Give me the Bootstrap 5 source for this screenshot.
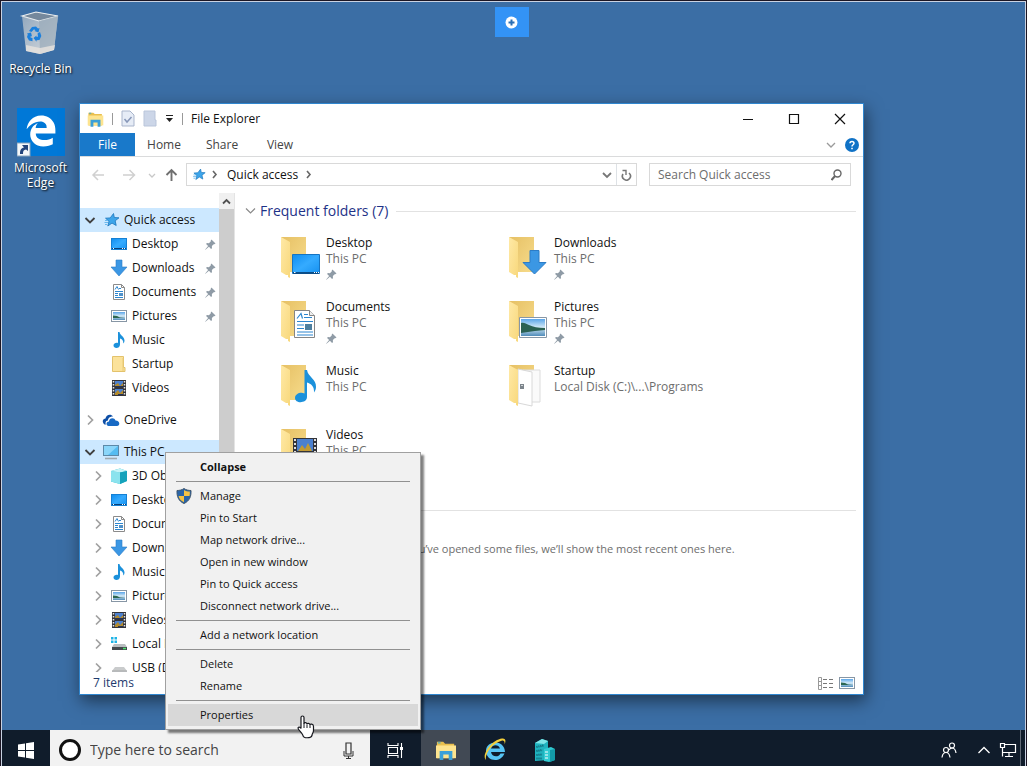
<!DOCTYPE html>
<html lang="en">
<head>
<meta charset="utf-8">
<meta name="viewport" content="width=device-width, initial-scale=1">
<title>File Explorer</title>
<link href="https://cdn.jsdelivr.net/npm/bootstrap@5.3.0/dist/css/bootstrap.min.css" rel="stylesheet">
<style>
  :root { --ui: "Open Sans", "Noto Sans", sans-serif; }
  body { font: 12px/16px var(--ui); color: #111; background: #1c1624; padding: 1px 1px 0 1px; }
  a { color: inherit; text-decoration: none; }
  button { font: inherit; color: inherit; background: none; border: 0; padding: 0; }
  svg { display: block; flex: none; }
  .screen { border: 1px solid #c9d2e2; border-bottom: 0; background: #3b6ea5; }

  .shortcuts { padding: 9px 0 0 5px; width: 72px; color: #fff; text-shadow: 1px 1px 2px #000; line-height: 15px; }
  .shortcuts a { margin-bottom: 32px; }
  .plus-tab { top: 5px; left: 50%; margin-left: -19px; width: 34px; height: 30px; background: #3393f6; }

  .win { left: 77px; right: 161px; top: 101px; bottom: 35px; background: #fff; border: 1px solid #2f86cf; box-shadow: 2px 6px 16px rgba(0,0,0,.5); }
  .titlebar { height: 29px; padding-left: 7px; }
  .titlebar .tick { width: 1px; height: 12px; background: #999; }
  .caption-btn { width: 46px; height: 28px; }
  .ribbon { height: 24px; border-bottom: 1px solid #dadbdc; color: #444; }
  .ribbon .file-tab { width: 55px; background: #1979ca; color: #fff; }
  .ribbon .ribbon-tab { width: 58px; }
  .address { height: 36px; padding: 6px 12px 7px 10px; }
  .field { border: 1px solid #d9d9d9; height: 23px; background: #fff; }
  .field input { border: 0; outline: 0; font: inherit; color: #6d6d6d; min-width: 0; background: none; }
  .find-field { width: 202px; margin-left: 12px; }
  input::placeholder { color: #6d6d6d; opacity: 1; }

  .navpane { width: 139px; padding-top: 15px; }
  .navpane a { height: 24px; display: flex; align-items: center; white-space: nowrap; padding-left: 4px; }
  .navpane a.sub { padding-left: 12px; }
  .navpane a.on { background: #cce8ff; }
  .navpane .gap-top { margin-top: 8px; }
  .navpane .ar { width: 12px; height: 12px; }
  .navpane .ic { width: 18px; height: 18px; margin: 0 4px 0 6px; }
  .navpane .ic + span { flex: 1; }
  .pin { width: 11px; height: 11px; }
  .navpane .pin { margin-right: 3px; }
  .scroller { width: 16px; background: #cdcdcd; border-right: 1px solid #e4e4e4; }
  .scroller button { height: 16px; background: #f0f0f0; }
  .listing { padding: 7px 7px 0 10px; }
  .group-head { font-size: 14px; line-height: 22px; color: #1e3287; white-space: nowrap; }
  .group-head .rule { height: 1px; background: #e2e2e2; }
  .folders { grid-template-columns: 228px 228px; grid-auto-rows: 64px; padding: 13px 0 0 35px; height: 277px; }
  .folders a { color: #6d6d6d; gap: 6px; }
  .folders strong { color: #111; font-weight: 400; display: block; }
  .folders .pin { margin-top: 2px; }
  .empty-note { font-size: 11px; color: #6d6d6d; padding: 20px 0 0 12px; }
  .statusbar { height: 22px; padding: 0 7px 0 13px; color: #1e3a6e; }

  .ctx { left: 163px; bottom: 0; width: 256px; font-size: 11px; background: #f1f1f1; border: 1px solid #a0a0a0; padding: 3px 2px; box-shadow: 3px 3px 2px rgba(0,0,0,.5); z-index: 3; }
  .ctx button { height: 22px; display: flex; align-items: center; width: 100%; padding-left: 32px; white-space: nowrap; }
  .ctx button.with-icon { padding-left: 8px; gap: 8px; }
  .ctx button.hover { background: #d8d8d8; }
  .ctx hr { margin: 3px 8px; border-top: 1px solid #919191; opacity: 1; }
  .pointer { left: 295px; bottom: -9px; z-index: 4; }

  .taskbar { height: 36px; background: #101c2b; color: #fff; }
  .taskbar button, .cortana { padding-top: 4px; }
  .taskbar .cortana button, .tray button { padding-top: 0; }
  .taskbar .start { width: 48px; }
  .cortana { width: 320px; background: #f2f2f2; padding: 4px 12px 0 8px; }
  .cortana input { font: 14px/20px var(--ui); border: 0; outline: 0; background: none; min-width: 0; }
  .cortana input::placeholder { color: #444; }
  .task { width: 49px; }
  .task.view { width: 51px; }
  .task.live { background: #414954; }
  .tray { padding: 4px 3px 0 0; }
  .peek { width: 5px; border-left: 1px solid #626b77 !important; }
</style>
<script src="https://cdn.jsdelivr.net/npm/bootstrap@5.3.0/dist/js/bootstrap.bundle.min.js"></script>
</head>
<body class="vh-100 d-flex flex-column overflow-hidden">

<!-- shared icon set -->
<svg width="0" height="0" class="position-absolute" aria-hidden="true">
  <defs>
    <linearGradient id="gBack" x1="0" y1="0" x2="1" y2="1"><stop offset="0" stop-color="#e6c064"/><stop offset="1" stop-color="#f7dc8c"/></linearGradient>
    <linearGradient id="gFlap" x1="0" y1="0" x2="1" y2="1"><stop offset="0" stop-color="#ffe9a6"/><stop offset="1" stop-color="#f8d87c"/></linearGradient>
    <linearGradient id="gBlue" x1="0" y1="0" x2="1" y2="1"><stop offset="0" stop-color="#0f8df0"/><stop offset=".5" stop-color="#35abff"/><stop offset="1" stop-color="#1691f0"/></linearGradient>
    <linearGradient id="gSky" x1="0" y1="0" x2="0" y2="1"><stop offset="0" stop-color="#5aa5e8"/><stop offset=".5" stop-color="#d5ebf8"/><stop offset="1" stop-color="#4f8bb8"/></linearGradient>
    <linearGradient id="gBin" x1="0" y1="0" x2="1" y2="1"><stop offset="0" stop-color="#8fa5bb"/><stop offset=".7" stop-color="#c3ccd5"/><stop offset="1" stop-color="#e8e8e6"/></linearGradient>
  </defs>
  <symbol id="right" viewBox="0 0 12 12"><path d="M4 1.500l4.500 4.500L4 10.500" fill="none" stroke="#a0a0a0" stroke-width="1.700"/></symbol>
  <symbol id="open" viewBox="0 0 12 12"><path d="M1.500 4L6 8.500 10.500 4" fill="none" stroke="#404040" stroke-width="1.800"/></symbol>
  <symbol id="pin" viewBox="0 0 12 12"><path d="M7 .5l4.500 4.500-1.500.8-.5-.2L7.500 7.700l.1 2.300-1 .8-2.300-2.300L.5 11.800l-.3-.3 3.200-3.900L1.200 5.400l.8-1 2.300.1L6.400 2.500l-.2-.6z" fill="#8f9ba6"/></symbol>
  <symbol id="star" viewBox="0 0 18 18"><path d="M11.500 2.500l.8 4 4.700.3-3.800 3 1 4.700-4.200-2.400L5.800 15l1.200-4.700L3.500 7.200l4.700-.3z" fill="#3da5ea" stroke="#1a76bd" stroke-width=".8"/><path d="M3 9.500h3M2.500 11.500h3.500M3 13.500h2" stroke="#68b7ed" stroke-width="1"/></symbol>
  <symbol id="desk" viewBox="0 0 18 18"><rect x="1.500" y="3.500" width="15" height="11" fill="url(#gBlue)" stroke="#1580d4"/><path d="M2 13.500h14" stroke="#073f78"/><path d="M3 13.500h1M12 13.500h1m1 0h1" stroke="#fff"/></symbol>
  <symbol id="down" viewBox="0 0 18 18"><path d="M6 1h6v7h5L9 17 1 8h5z" fill="#3b97e4" stroke="#2c7cc6" stroke-width=".6"/></symbol>
  <symbol id="doc" viewBox="0 0 18 18"><path d="M3.500 1.500h8l3 3v12h-11z" fill="#fff" stroke="#8b8b8b"/><path d="M11.500 1.500v3h3" fill="none" stroke="#8b8b8b"/><path d="M5 6.500l2-3 1.500 3M9 5.500h2M5 8.500h8M5 10.500h3M5 12.500h3M5 14.500h8" stroke="#2c86cf" fill="none"/><path d="M9 10h4v3H9z" fill="#4f91c9"/></symbol>
  <symbol id="pic" viewBox="0 0 18 18"><rect x="1.500" y="3.500" width="15" height="11" fill="#fff" stroke="#8796a5"/><rect x="3" y="5" width="12" height="8" fill="url(#gSky)"/><path d="M3 8.500l4 .5 3 1.500 5 .5H3z" fill="#2b6650"/></symbol>
  <symbol id="music" viewBox="0 0 18 18"><path d="M8 1h1.500c.5 3.500 5 4.500 5 8.500 0 1.500-.7 2.500-1.200 3 .3-3-1.500-4.500-3.300-5V13.500c0 4.500-6.500 4.500-6.500 1 0-2.300 2.800-3.300 4.500-2.500z" fill="#1c91db"/></symbol>
  <symbol id="fold" viewBox="0 0 18 18"><path d="M2.500 1.500h11v11h1.500v4H2.500z" fill="#fbe29a" stroke="#e3c26c"/><path d="M13 3v13" stroke="#e9ca76"/></symbol>
  <symbol id="video" viewBox="0 0 18 18"><path d="M2 1h14v16H2z" fill="#33343a"/><path d="M3.500 2v14M14.500 2v14" stroke="#e5e5e5" stroke-width="1.500" stroke-dasharray="1.500 1.500"/><path d="M5 2h8v6H5zM5 10h8v6H5z" fill="#4b80cf"/><path d="M5 6l3-2 2 3 3-3v4H5zM5 14l3-3 2 3 3-3v5H5z" fill="#b48a2a"/><path d="M5 7h8v1H5zM8 15h5v1H8z" fill="#25345a"/></symbol>
  <symbol id="cloud" viewBox="0 0 18 18"><path d="M1.500 12.500C-.5 9 2 7.500 3.500 7.500 4 3.500 9 2.500 11 5.500 7 5.500 6 8 6 9.500 3.500 9.500 3 12.500 4 13.500 3 13.500 2 13.500 1.500 12.500z" fill="#0d4ea6"/><path d="M6.500 15C3.500 14.500 4 10.500 7 10.500 7 6.500 12.500 6 13.500 9.500 18 9.500 18.500 15 15 15z" fill="#1769c4"/></symbol>
  <symbol id="pc" viewBox="0 0 18 18"><rect x="1.500" y="2.500" width="15" height="10" fill="#55bcf2" stroke="#5c89a8"/><path d="M2 3h14L6 12H2z" fill="#8ad6fa"/><path d="M3 15.500h12" stroke="#9fa8ae" stroke-width="1.600"/></symbol>
  <symbol id="cube" viewBox="0 0 18 18"><path d="M1 4l9-2.500L17 4v10l-7 3-9-2.500z" fill="#25b7cd"/><path d="M1 4l9 1.500V17l-9-2.500z" fill="#8be3ee"/><path d="M1 4l9-2.500L17 4l-7 1.500z" fill="#c6f4f8"/><path d="M10 5.500L17 4v10l-7 3z" fill="#15a2bb"/></symbol>
  <symbol id="disk" viewBox="0 0 18 18"><path d="M1 2h2.500v2.500H1zM4.500 2H7v2.500H4.500zM1 5.500h2.500V8H1zM4.500 5.500H7V8H4.500z" fill="#1fb4e6"/><path d="M4 9h11l2 3H2z" fill="#b9bdc0"/><path d="M2 12h15v3H2z" fill="#43484c"/><path d="M13 13.500h3" stroke="#4be36c" stroke-width="1.500"/></symbol>
  <symbol id="usb" viewBox="0 0 18 18"><path d="M5 8h9l3 4v4H2v-4z" fill="#c9cbcc"/><path d="M2 12h15" stroke="#a6a8a9"/></symbol>
  <symbol id="explorer" viewBox="0 0 24 22"><path d="M2 2h7l2 2h10v16H2z" fill="#e9bf4d"/><path d="M1 6h22v14H1z" fill="#fde48f"/><path d="M3 2h3v2H3z" fill="#6fb0a8"/><path d="M5 12h14v10h-4v-6H9v6H5z" fill="#3aa0d8"/></symbol>
  <symbol id="bigfold" viewBox="0 0 40 44"><path d="M1 2h25v35H9z" fill="url(#gBack)"/><path d="M1 2l9 5v36l-2-1v-2l-2 0-5-3z" fill="url(#gFlap)"/></symbol>
  <symbol id="edge" viewBox="0 0 512 512"><path d="M25.714 228.163c.111-.162.23-.323.342-.485-.021.162-.045.323-.065.485h-.277zm460.572 15.508c0-44.032-7.754-84.465-28.801-122.405C416.498 47.879 343.912 8.001 258.893 8.001 118.962 7.724 40.617 113.214 26.056 227.679c42.429-61.312 117.073-121.376 220.375-124.966 0 0 109.666 0 99.419 104.957H169.997c6.369-37.386 18.554-58.986 34.339-78.926-75.048 34.893-121.850 96.096-120.742 188.315.83 71.448 50.124 144.836 120.743 171.976 83.357 31.847 192.776 7.200 240.132-21.324V363.307c-80.864 56.494-270.871 60.925-272.255-67.572h314.073v-52.064z" fill="#fff"/></symbol>
</svg>

<div class="screen flex-grow-1 d-flex flex-column">
  <main class="flex-grow-1 position-relative">
    <nav class="shortcuts d-flex flex-column" aria-label="Desktop">
      <a href="#" class="d-flex flex-column align-items-center text-center">
        <svg width="44" height="50" viewBox="0 0 44 50">
          <path d="M3 5L17 1l22 4-4 34-14 4L7 40z" fill="url(#gBin)"/>
          <path d="M3 5l17 5 19-5-22-4z" fill="#75889c" stroke="#e9edf0" stroke-width="1.200"/>
          <path d="M20 10l19-5-4 33-14 5z" fill="#9aabb9" opacity=".7"/>
          <path d="M7 34l14 3 15-3-1 5-14 4-14-3z" fill="#e8e4df" opacity=".8"/>
          <g fill="#1b7fdc"><path d="M10 20l3-4 4-.5 2 2 1.500-.5-1 4.500-4-1.500 1-.8-1.500-1L12.500 21z"/><path d="M18.500 22.500l2.500-1.500 1.300 4-1.800 4-3 .2v1.500L14.500 27l3-2.500v1.500l1.500-.5z"/><path d="M8 22.500l4-1 1 4-1.200-.5-.3 1.500 2 .5v3.200l-3.500-.7-2-3.500.8-2.500z"/></g>
        </svg>
        Recycle Bin
      </a>
      <a href="#" class="d-flex flex-column align-items-center text-center">
        <svg width="48" height="52" viewBox="0 0 48 52">
          <rect width="48" height="48" fill="#0078d7"/>
          <use href="#edge" x="8" y="7" width="32" height="32"/>
          <rect y="35" width="13" height="13" fill="#f5f8fa" stroke="#8aa4bd"/>
          <path d="M3 46c0-4 1-6 4-6.500L5 37h6v6L9 41.500C6.500 42 6 43 6 46z" fill="#24457c"/>
        </svg>
        Microsoft Edge
      </a>
    </nav>

    <button class="plus-tab position-absolute d-flex align-items-center justify-content-center" aria-label="Open toolbar">
      <svg width="13" height="13" viewBox="0 0 13 13"><circle cx="6.500" cy="6.500" r="6" fill="#fff"/><path d="M6.500 3.500v6M3.500 6.500h6" stroke="#2b6fb5" stroke-width="2"/></svg>
    </button>

    <section class="win position-absolute d-flex flex-column">
      <header class="titlebar d-flex align-items-center flex-shrink-0">
        <svg width="17" height="16"><use href="#explorer"/></svg>
        <span class="tick ms-2 me-2"></span>
        <svg width="14" height="17" viewBox="0 0 14 17"><path d="M1 1h8l4 4v11H1z" fill="#e6ecf6" stroke="#a9b5cc"/><path d="M3.500 9l2.500 3 4.500-5" fill="none" stroke="#8797b8" stroke-width="1.500"/></svg>
        <svg class="ms-2" width="14" height="17" viewBox="0 0 14 17"><path d="M1 1h11v9h1v6H1z" fill="#ccd6e8" stroke="#b9c5da"/></svg>
        <svg class="ms-2" width="9" height="9" viewBox="0 0 9 9"><path d="M1 1.500h7" stroke="#222"/><path d="M1 4h7L4.500 8z" fill="#222"/></svg>
        <span class="tick ms-2 me-2"></span>
        <span class="flex-grow-1">File Explorer</span>
        <button class="caption-btn" aria-label="Minimize"><svg class="mx-auto" width="12" height="12"><path d="M1 6.500h10" stroke="#111"/></svg></button>
        <button class="caption-btn" aria-label="Maximize"><svg class="mx-auto" width="12" height="12"><path d="M1.500 1.500h9v9h-9z" fill="none" stroke="#111" stroke-width="1.200"/></svg></button>
        <button class="caption-btn" aria-label="Close"><svg class="mx-auto" width="12" height="12"><path d="M1 1l10 10M11 1L1 11" stroke="#111" stroke-width="1.200"/></svg></button>
      </header>

      <div class="ribbon d-flex align-items-stretch flex-shrink-0">
        <button class="file-tab">File</button>
        <button class="ribbon-tab">Home</button>
        <button class="ribbon-tab">Share</button>
        <button class="ribbon-tab me-auto">View</button>
        <button class="me-2" aria-label="Expand ribbon"><svg width="12" height="12" viewBox="0 0 12 12"><path d="M2 4l4 4 4-4" fill="none" stroke="#9a9a9a" stroke-width="1.300"/></svg></button>
        <button class="rounded-circle me-1 align-self-center" aria-label="Help"><svg width="14" height="14" viewBox="0 0 14 14"><circle cx="7" cy="7" r="7" fill="#1072c6"/><path d="M5 5.300c0-2.600 4-2.400 4 0C9 6.800 7 6.800 7 8.500" fill="none" stroke="#fff" stroke-width="1.500"/><path d="M6.200 9.800h1.600v1.500H6.200z" fill="#fff"/></svg></button>
      </div>

      <div class="address d-flex align-items-center flex-shrink-0">
        <button aria-label="Back"><svg width="16" height="14" viewBox="0 0 16 14"><path d="M14 7H3m5-5L3 7l5 5" fill="none" stroke="#d0d0d0" stroke-width="1.500"/></svg></button>
        <button class="ms-3" aria-label="Forward"><svg width="14" height="14" viewBox="0 0 14 14"><path d="M1 7h11M7.500 2l5 5-5 5" fill="none" stroke="#d0d0d0" stroke-width="1.500"/></svg></button>
        <button class="ms-2 px-1" aria-label="Recent locations"><svg width="8" height="8" viewBox="0 0 8 8"><path d="M1 3l3 3 3-3" fill="none" stroke="#c8c8c8" stroke-width="1.300"/></svg></button>
        <button class="ms-1" aria-label="Up"><svg width="14" height="14" viewBox="0 0 14 14"><path d="M7.500 13V2.500M2.500 7l5-5 5 5" fill="none" stroke="#707070" stroke-width="1.900"/></svg></button>
        <div class="field ms-2 flex-grow-1 d-flex align-items-center">
          <svg class="ms-1" width="15" height="15"><use href="#star"/></svg>
          <svg class="ms-1 me-2" width="9" height="9" viewBox="0 0 9 9"><path d="M3 1l3 3.500L3 8" fill="none" stroke="#666" stroke-width="1.600"/></svg>
          <a href="#">Quick access</a>
          <svg class="ms-2 me-auto" width="9" height="9" viewBox="0 0 9 9"><path d="M1 1l3 3.500L1 8" fill="none" stroke="#666" stroke-width="1.600"/></svg>
          <button class="me-1" aria-label="Previous locations"><svg width="10" height="10" viewBox="0 0 10 10"><path d="M1 3l4 4 4-4" fill="none" stroke="#777" stroke-width="1.800"/></svg></button>
          <button class="border-start h-100 px-1" aria-label="Refresh"><svg width="11" height="12" viewBox="0 0 11 12"><path d="M2 5a4 4 0 1 0 6-1" fill="none" stroke="#777" stroke-width="1.600"/><path d="M1.500 1.500H5V6" fill="none" stroke="#777" stroke-width="1.400"/></svg></button>
        </div>
        <div class="field find-field d-flex align-items-center px-2">
          <input class="flex-grow-1 p-0" type="text" aria-label="Search Quick access" placeholder="Search Quick access">
          <svg width="11" height="12" viewBox="0 0 11 12"><circle cx="6.500" cy="4.500" r="3.500" fill="none" stroke="#666" stroke-width="1.400"/><path d="M4 7L.5 11" stroke="#666" stroke-width="2"/></svg>
        </div>
      </div>

      <div class="flex-grow-1 d-flex overflow-hidden">
        <nav class="navpane flex-shrink-0" aria-label="Folders">
          <a href="#" class="on"><svg class="ar"><use href="#open"/></svg><svg class="ic"><use href="#star"/></svg><span>Quick access</span></a>
          <a href="#" class="sub"><i class="ar"></i><svg class="ic"><use href="#desk"/></svg><span>Desktop</span><svg class="pin"><use href="#pin"/></svg></a>
          <a href="#" class="sub"><i class="ar"></i><svg class="ic"><use href="#down"/></svg><span>Downloads</span><svg class="pin"><use href="#pin"/></svg></a>
          <a href="#" class="sub"><i class="ar"></i><svg class="ic"><use href="#doc"/></svg><span>Documents</span><svg class="pin"><use href="#pin"/></svg></a>
          <a href="#" class="sub"><i class="ar"></i><svg class="ic"><use href="#pic"/></svg><span>Pictures</span><svg class="pin"><use href="#pin"/></svg></a>
          <a href="#" class="sub"><i class="ar"></i><svg class="ic"><use href="#music"/></svg><span>Music</span></a>
          <a href="#" class="sub"><i class="ar"></i><svg class="ic"><use href="#fold"/></svg><span>Startup</span></a>
          <a href="#" class="sub"><i class="ar"></i><svg class="ic"><use href="#video"/></svg><span>Videos</span></a>
          <a href="#" class="gap-top"><svg class="ar"><use href="#right"/></svg><svg class="ic"><use href="#cloud"/></svg><span>OneDrive</span></a>
          <a href="#" class="on gap-top"><svg class="ar"><use href="#open"/></svg><svg class="ic"><use href="#pc"/></svg><span>This PC</span></a>
          <a href="#" class="sub"><svg class="ar"><use href="#right"/></svg><svg class="ic"><use href="#cube"/></svg><span>3D Objects</span></a>
          <a href="#" class="sub"><svg class="ar"><use href="#right"/></svg><svg class="ic"><use href="#desk"/></svg><span>Desktop</span></a>
          <a href="#" class="sub"><svg class="ar"><use href="#right"/></svg><svg class="ic"><use href="#doc"/></svg><span>Documents</span></a>
          <a href="#" class="sub"><svg class="ar"><use href="#right"/></svg><svg class="ic"><use href="#down"/></svg><span>Downloads</span></a>
          <a href="#" class="sub"><svg class="ar"><use href="#right"/></svg><svg class="ic"><use href="#music"/></svg><span>Music</span></a>
          <a href="#" class="sub"><svg class="ar"><use href="#right"/></svg><svg class="ic"><use href="#pic"/></svg><span>Pictures</span></a>
          <a href="#" class="sub"><svg class="ar"><use href="#right"/></svg><svg class="ic"><use href="#video"/></svg><span>Videos</span></a>
          <a href="#" class="sub"><svg class="ar"><use href="#right"/></svg><svg class="ic"><use href="#disk"/></svg><span>Local Disk</span></a>
          <a href="#" class="sub"><svg class="ar"><use href="#right"/></svg><svg class="ic"><use href="#usb"/></svg><span>USB (D:)</span></a>
        </nav>
        <div class="scroller flex-shrink-0">
          <button class="w-100 d-flex align-items-center justify-content-center" aria-label="Scroll up"><svg width="9" height="9" viewBox="0 0 9 9"><path d="M1 6.500L4.500 3 8 6.500" fill="none" stroke="#505050" stroke-width="1.800"/></svg></button>
        </div>

        <div class="listing flex-grow-1">
          <div class="group-head d-flex align-items-center">
            <svg class="me-1" width="11" height="10" viewBox="0 0 11 10"><path d="M1 2.500l4.500 4.500L10 2.500" fill="none" stroke="#8a8a8a" stroke-width="1.200"/></svg>
            <span>Frequent folders (7)</span><span class="rule flex-grow-1 ms-2"></span>
          </div>
          <div class="folders d-grid">
            <a href="#" class="d-flex"><svg width="40" height="44" viewBox="0 0 40 44"><use href="#bigfold"/><path d="M12.500 19.500h27v19h-27z" fill="url(#gBlue)" stroke="#1674c2"/><path d="M13 38h26" stroke="#0b4d88" stroke-width="2"/><path d="M14 37.500h1.500M34 37.500h1m1 0h1m1 0h1" stroke="#fff"/></svg><div><strong>Desktop</strong>This PC<svg class="pin"><use href="#pin"/></svg></div></a>
            <a href="#" class="d-flex"><svg width="40" height="44" viewBox="0 0 40 44"><use href="#bigfold"/><path d="M22 15.500h9v12h7L26.500 39 15 27.500h7z" fill="#3b97e4" stroke="#2c7cc6"/></svg><div><strong>Downloads</strong>This PC<svg class="pin"><use href="#pin"/></svg></div></a>
            <a href="#" class="d-flex"><svg width="40" height="44" viewBox="0 0 40 44"><use href="#bigfold"/><path d="M14.500 11.500h15l5 5v22h-20z" fill="#fff" stroke="#858585"/><path d="M29.500 11.500v5h5" fill="#eee" stroke="#858585"/><path d="M17 19.500l4-5 1.500 5M24 15.500h4M24 18.500h8M17 22.500h16M17 26h7M17 29.500h7M17 33h16M17 36h16" fill="none" stroke="#2c86cf" stroke-width="1.200"/><path d="M25 25h7v6h-7z" fill="#4d7f9f"/></svg><div><strong>Documents</strong>This PC<svg class="pin"><use href="#pin"/></svg></div></a>
            <a href="#" class="d-flex"><svg width="40" height="44" viewBox="0 0 40 44"><use href="#bigfold"/><path d="M11.500 18.500h27v20h-27z" fill="#fff" stroke="#8796a5"/><path d="M13 20h24v17H13z" fill="url(#gSky)"/><path d="M13 24c3-1 5 1 8 2 4 2 9 3 16 3v2l-10 1-14 2z" fill="#2a6152"/></svg><div><strong>Pictures</strong>This PC<svg class="pin"><use href="#pin"/></svg></div></a>
            <a href="#" class="d-flex"><svg width="40" height="44" viewBox="0 0 40 44"><use href="#bigfold"/><path d="M24.500 7h2.500c1 7 9.500 9 9 17 0 2-.8 4-2 5.500.5-6-3-9-7-10V34c0 6.500-12 7-12 1 0-4.500 6-6.500 9.500-4.500z" fill="#1c91db"/></svg><div><strong>Music</strong>This PC</div></a>
            <a href="#" class="d-flex"><svg width="40" height="44" viewBox="0 0 40 44"><path d="M1 2h25v35H9z" fill="url(#gBack)"/><path d="M15 7h17v32H15z" fill="#fafafa" stroke="#dcdcdc"/><path d="M10 6l14 3v34l-14-3z" fill="#fff" stroke="#d8d8d8"/><path d="M12 21h4v5h-4z" fill="#7d858c"/><path d="M13 22h2v1h-2z" fill="#d4d8da"/><path d="M1 2l9 5v36l-2-1v-2l-2 0-5-3z" fill="url(#gFlap)"/></svg><div><strong>Startup</strong>Local Disk (C:)\...\Programs</div></a>
            <a href="#" class="d-flex"><svg width="40" height="44" viewBox="0 0 40 44"><use href="#bigfold"/><path d="M13 11h24v28H13z" fill="#33343a"/><path d="M15 12v26M35 12v26" stroke="#ddd" stroke-width="2" stroke-dasharray="2 2"/><path d="M17 12h16v12H17z" fill="#4b80cf"/><path d="M18 24l4-6 3 4 3-6 4 8z" fill="#c19a34"/></svg><div><strong>Videos</strong>This PC</div></a>
          </div>
          <div class="group-head d-flex align-items-center">
            <svg class="me-1" width="11" height="10" viewBox="0 0 11 10"><path d="M1 2.500l4.500 4.500L10 2.500" fill="none" stroke="#8a8a8a" stroke-width="1.200"/></svg>
            <span>Recent files (0)</span><span class="rule flex-grow-1 ms-2"></span>
          </div>
          <div class="empty-note text-center">After you’ve opened some files, we’ll show the most recent ones here.</div>
        </div>
      </div>

      <footer class="statusbar d-flex align-items-center flex-shrink-0">
        <span class="me-auto">7 items</span>
        <button aria-label="Details view"><svg width="17" height="13" viewBox="0 0 17 13"><path d="M1.500.5h3v12h-3zM1.500 4.500h3M1.500 8.500h3" fill="none" stroke="#999"/><path d="M6 2.500h4m2 0h4M6 6.500h4m2 0h4M6 10.500h4m2 0h4" stroke="#777"/></svg></button>
        <button class="ms-1" aria-label="Large icons view"><svg width="18" height="18"><use href="#pic"/></svg></button>
      </footer>
    </section>

    <div class="ctx position-absolute" role="menu">
      <button role="menuitem" class="fw-bold">Collapse</button>
      <hr>
      <button role="menuitem" class="with-icon"><svg width="16" height="16" viewBox="0 0 16 16"><path d="M8 .5c2 1.500 4.500 2 7 2 .3 6-1.500 10.500-7 13C2.500 13 .7 8.500 1 2.500c2.500 0 5-.5 7-2z" fill="#2a65a8"/><path d="M8 2c1.700 1 3.500 1.500 5.800 1.600.2 1.400 0 3-.3 4.400H8zM8 8v6.300C5 12.800 3.200 10.800 2.500 8z" fill="#f6c344"/><path d="M8 .5c2 1.500 4.500 2 7 2 .3 6-1.500 10.500-7 13C2.500 13 .7 8.500 1 2.500c2.500 0 5-.5 7-2z" fill="none" stroke="#40566b"/></svg>Manage</button>
      <button role="menuitem">Pin to Start</button>
      <button role="menuitem">Map network drive...</button>
      <button role="menuitem">Open in new window</button>
      <button role="menuitem">Pin to Quick access</button>
      <button role="menuitem">Disconnect network drive...</button>
      <hr>
      <button role="menuitem">Add a network location</button>
      <hr>
      <button role="menuitem">Delete</button>
      <button role="menuitem">Rename</button>
      <hr>
      <button role="menuitem" class="hover">Properties</button>
    </div>

    <svg class="pointer position-absolute" width="18" height="24" viewBox="0 0 18 24" aria-hidden="true"><path d="M4 2.500C4 .5 7 .5 7 2.500V9c0-2 3-1.800 3 .3C10 7.800 13 7.900 13 10c0-1.500 3.500-1.200 3.500 1.500v4c0 2.500-1.500 3-1.500 5-1 3-9 3-9 0C5 17.500 1 15 1 13c.3-1.500 2.200-1 3 .5z" fill="#fff" stroke="#15161c" stroke-width="1.200"/><path d="M7 8.500V13M10 9.500V13M13 10v3" stroke="#15161c"/></svg>
  </main>

  <footer class="taskbar d-flex align-items-stretch flex-shrink-0">
    <button class="start" aria-label="Start"><svg class="mx-auto" width="16" height="17" viewBox="0 0 16 17"><path d="M0 2.500L7 1.500v6.500H0zM8 1.300L16 0v8H8zM0 9h7v6.500L0 14.500zM8 9h8v8L8 15.700z" fill="#fff"/></svg></button>
    <div class="cortana d-flex align-items-center">
      <svg width="24" height="24" viewBox="0 0 24 24"><circle cx="12" cy="12" r="9.500" fill="#fff" stroke="#111" stroke-width="3"/></svg>
      <input class="flex-grow-1 ps-2" type="text" aria-label="Type here to search" placeholder="Type here to search">
      <svg class="me-1" width="11" height="17" viewBox="0 0 11 17"><path d="M3 1h5v11H3z" fill="none" stroke="#333" stroke-width="1.200"/><path d="M1 9v5h9V9M5.500 14v3M3 16.500h5" fill="none" stroke="#333"/></svg>
    </div>
    <button class="task view" aria-label="Task view"><svg class="mx-auto" width="17" height="15" viewBox="0 0 17 15"><path d="M1.500 4.500h9v6h-9zM1 0v2.500h10V0M1 15v-2.500h10V15M14.500 0v15" fill="none" stroke="#fff" stroke-width="1.100"/><path d="M13 4h3v3h-3z" fill="#fff"/></svg></button>
    <button class="task live" aria-label="File Explorer"><svg class="mx-auto" width="22" height="20"><use href="#explorer"/></svg></button>
    <button class="task" aria-label="Internet Explorer"><svg class="mx-auto" width="26" height="26" viewBox="0 0 26 26"><path d="M18.500 16.500h4C18 27 3.500 24 4 13.500 4.500 3 22.500 2 23 15H9c.5 5 7.500 6 9.500 1.500zM9 11.500h9c-1-4.500-8-4.500-9 0z" fill="#56c4f4" fill-rule="evenodd"/><path d="M4 23C-1 19 9 3 20 1.500c4-.5 4 3 2.500 6 .5-3-.5-4.500-3-3.800C10 6.500 2.500 17 4 23z" fill="#f3ce3a"/></svg></button>
    <button class="task me-auto" aria-label="Server Manager"><svg class="mx-auto" width="24" height="24" viewBox="0 0 24 24"><path d="M3 5l7-4 6 2v19L3 23z" fill="#1fb3bf"/><path d="M12 11l7-2 4 2v11l-6 2-5-1z" fill="#31cbd3"/><path d="M4.500 9l7-1.500M4.500 13l6-1M4.500 17l6-.5M4.500 20.500h6" stroke="#0d5b6b" stroke-width="2" stroke-dasharray="1 1"/><path d="M3 5l7-4 6 2-4 3z" fill="#7fe6e8"/><path d="M18 12l5-1v11l-5 2z" fill="#139aa8"/><path d="M13 14h3M13 17h3M13 20h3" stroke="#fff"/></svg></button>
    <div class="tray d-flex align-items-center">
      <button class="me-3" aria-label="People"><svg width="16" height="17" viewBox="0 0 16 17"><g fill="none" stroke="#fff" stroke-width="1.200"><circle cx="5" cy="8" r="2.500"/><path d="M1 15.500c.5-3.500 2-5 4-5s3.500 1.500 4 5"/><circle cx="11" cy="3.500" r="2.500"/><path d="M8 8c1-1.500 2-2 3-2 2 0 3.500 1.500 4 5"/></g></svg></button>
      <button class="ms-1 me-2" aria-label="Show hidden icons"><svg width="14" height="12" viewBox="0 0 14 12"><path d="M1.500 9L7 3.500 12.500 9" fill="none" stroke="#fff" stroke-width="1.300"/></svg></button>
      <button aria-label="Network"><svg width="18" height="16" viewBox="0 0 18 16"><path d="M6 2.500h10.500v8h-13V7M10 10.500v4M6 14.500h8M3.500 5v9.500" fill="none" stroke="#fff" stroke-width="1.200"/><path d="M1.500 1.500h4v4h-4z" fill="#101c2b" stroke="#fff" stroke-width="1.200"/></svg></button>
    </div>
    <button class="peek" aria-label="Show desktop"></button>
  </footer>
</div>
</body>
</html>
